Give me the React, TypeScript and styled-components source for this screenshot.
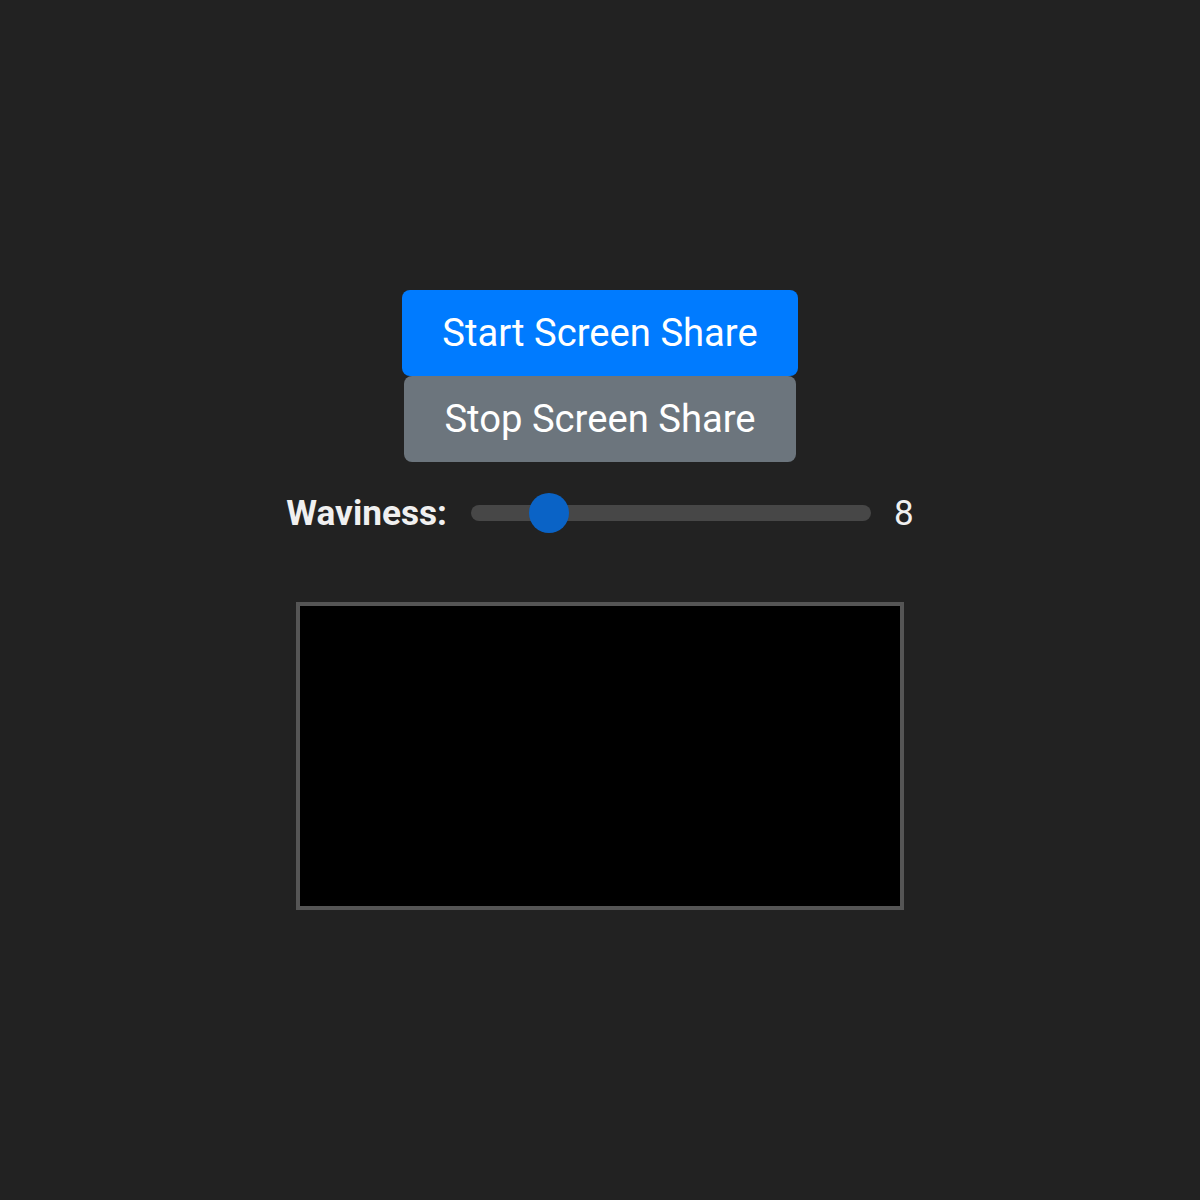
import styled, { createGlobalStyle } from "styled-components";
import { useState } from "react";

const GlobalStyle = createGlobalStyle`
  html, body {
    margin: 0;
    padding: 0;
    background: #222222;
    font-family: Roboto, "Liberation Sans", sans-serif;
    color: #f0f0f0;
  }
`;

const Page = styled.div`
  min-height: 1200px;
  display: flex;
  flex-direction: column;
  align-items: center;
  justify-content: center;
`;

const Button = styled.button<{ $variant: "primary" | "secondary" }>`
  display: block;
  border: none;
  border-radius: 8px;
  padding: 20px 40px;
  font-family: Roboto, "Liberation Sans", sans-serif;
  font-size: 38.2px;
  line-height: 46px;
  color: #ffffff;
  background-color: ${(p) => (p.$variant === "primary" ? "#007bff" : "#6c757d")};
  cursor: pointer;
`;

const Controls = styled.div`
  display: flex;
  align-items: center;
  gap: 24px;
  margin-top: 30px;
`;

const Label = styled.label`
  font-size: 35.2px;
  font-weight: 700;
  color: #f0f0f0;
`;

const Slider = styled.input`
  -webkit-appearance: none;
  appearance: none;
  width: 400px;
  height: 16px;
  margin: 0;
  border-radius: 8px;
  background: #474747;
  outline: none;

  &::-webkit-slider-thumb {
    -webkit-appearance: none;
    appearance: none;
    width: 40px;
    height: 40px;
    border-radius: 50%;
    background: #0a63c6;
    cursor: pointer;
  }
`;

const Value = styled.span`
  font-size: 35px;
  color: #f0f0f0;
  margin-left: -1px;
`;

const Canvas = styled.canvas`
  display: block;
  width: 600px;
  height: 300px;
  margin-top: 68px;
  background: #000000;
  border: 4px solid #555555;
`;

export default function App() {
  const [waviness, setWaviness] = useState(8);

  return (
    <>
      <GlobalStyle />
      <Page>
        <Button $variant="primary">Start Screen Share</Button>
        <Button $variant="secondary">Stop Screen Share</Button>
        <Controls>
          <Label htmlFor="waviness">Waviness:</Label>
          <Slider
            id="waviness"
            type="range"
            min={0}
            max={50}
            value={waviness}
            onChange={(e) => setWaviness(Number(e.target.value))}
          />
          <Value>{waviness}</Value>
        </Controls>
        <Canvas width={600} height={300} />
      </Page>
    </>
  );
}
